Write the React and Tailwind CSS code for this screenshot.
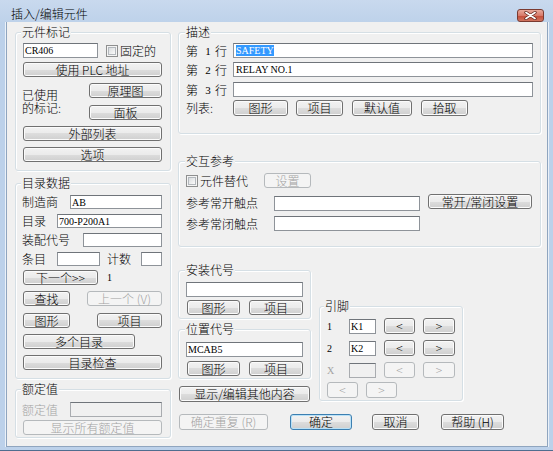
import React from 'react';

// Win7-style "插入/编辑元件" dialog

const Btn = ({ className = '', disabled, def, children }) => (
    <div
        className={`flex shrink-0 items-center justify-center rounded-[3px] border text-[12px] leading-[12px] ${disabled
            ? 'border-[#b5b9bc] bg-[#f4f4f4] text-[#a3a3a3]'
            : def
                ? 'border-[#3c7fb1] bg-[linear-gradient(#f2f2f2_0%,#ebebeb_50%,#dddddd_50%,#cfcfcf_100%)] text-black shadow-[inset_0_0_0_1px_#b9e1f7]'
                : 'border-[#707070] bg-[linear-gradient(#f2f2f2_0%,#ebebeb_50%,#dddddd_50%,#cfcfcf_100%)] text-black shadow-[inset_0_0_0_1px_#fbfbfb]'
            } ${className}`}
    >
        {children}
    </div>
);

const Field = ({ className = '', disabled, children }) => (
    <div
        className={`flex shrink-0 items-center overflow-hidden border border-[#8e9399] border-t-[#6f747a] pl-[1px] font-['Liberation_Serif',serif] text-[10px] leading-[11px] text-black ${disabled ? 'bg-[#f0f0f0] border-[#a9acb0]' : 'bg-white'} ${className}`}
    >
        {children}
    </div>
);

const Check = ({ className = '' }) => (
    <div className={`flex h-[12px] w-[12px] shrink-0 items-center justify-center border border-[#8e8f8f] bg-[#f4f4f4] ${className}`}>
        <div className="h-[8px] w-[8px] border border-[#b3b8bd] bg-[linear-gradient(135deg,#d9dcde,#fbfbfb)]" />
    </div>
);

const Group = ({ title, className = '', titleClass = 'ml-[5px]', children }) => (
    <div className={`flex shrink-0 flex-col rounded-[3px] border border-[#d5dfe5] shadow-[inset_1px_1px_0_#ffffff,1px_1px_0_#ffffff] ${className}`}>
        <div className={`-mt-[7px] h-[12px] w-fit bg-[#f0f0f0] px-[1px] text-[12px] leading-[12px] ${titleClass}`}>{title}</div>
        {children}
    </div>
);

const Label = ({ className = '', children }) => (
    <div className={`shrink-0 whitespace-nowrap text-[12px] leading-[12px] ${className}`}>{children}</div>
);

const LineLabel = ({ n }) => (
    <div className="ml-[7px] flex w-[47px] shrink-0 items-center text-[12px] leading-[12px]">
        <span>第</span>
        <span className="ml-[7px] w-[6px] text-center font-['Liberation_Serif',serif] text-[11px]">{n}</span>
        <span className="ml-[4px]">行</span>
    </div>
);

const PinRow = ({ n, value, disabled, className = '' }) => (
    <div className={`flex h-[16px] items-center ${className}`}>
        <div className={`ml-[7px] w-[22px] font-['Liberation_Serif',serif] text-[10px] ${disabled ? 'text-[#a3a3a3]' : 'text-black'}`}>{n}</div>
        <Field disabled={disabled} className="h-[15px] w-[27px]">{value}</Field>
        <Btn disabled={disabled} className="ml-[8px] h-[16px] w-[31px]">&lt;</Btn>
        <Btn disabled={disabled} className="ml-[8px] h-[16px] w-[32px]">&gt;</Btn>
    </div>
);

const CloseIcon = () => (
    <svg width="13" height="9" viewBox="0 0 13 9">
        <path d="M2 1.5 L11 7.5 M11 1.5 L2 7.5" stroke="#5a2018" strokeWidth="3.2" strokeLinecap="round" />
        <path d="M2 1.5 L11 7.5 M11 1.5 L2 7.5" stroke="#ffffff" strokeWidth="1.8" strokeLinecap="round" />
    </svg>
);

export default function App() {
    return (
        <div className="flex h-[451px] w-[553px] flex-col overflow-hidden bg-[#bcd1ea] font-['Noto_Sans_CJK_SC','Noto_Sans',sans-serif] font-light text-black">
            {/* Title bar */}
            <div className="flex h-[22px] shrink-0 bg-[linear-gradient(#c9d9ee,#bed2ea)]">
                <div className="ml-[11px] mt-[8px] text-[12px] leading-[12px]">插入/编辑元件</div>
                <div className="flex-1" />
                <div className="mr-[9px] mt-[9px] flex h-[13px] w-[27px] items-center justify-center rounded-[3px] border border-[#7a3a30] bg-[linear-gradient(#e9aa9c,#d77a6a_50%,#c24a36_51%,#d0745f)]">
                    <CloseIcon />
                </div>
            </div>

            <div className="flex">
                <div className="w-[6px] shrink-0 border-r border-r-[#eaf1f9]" />
                {/* Client area */}
                <div className="flex h-[425px] w-[542px] border-x border-b border-[#8fa5bf]">
                    <div className="flex h-[424px] w-[540px] bg-[#f0f0f0]">
                        {/* Left column */}
                        <div className="ml-[8px] mt-[10px] flex w-[156px] flex-col">
                            <Group title="元件标记" className="h-[139px]">
                                <div className="mt-[5px] flex h-[15px] items-center">
                                    <Field className="ml-[7px] h-[15px] w-[75px]">CR406</Field>
                                    <Check className="ml-[8px]" />
                                    <Label className="ml-[2px]">固定的</Label>
                                </div>
                                <Btn className="ml-[7px] mt-[4px] h-[15px] w-[139px]">使用 PLC 地址</Btn>
                                <div className="mt-[6px] flex">
                                    <div className="ml-[6px] mt-[6px] flex w-[67px] flex-col text-[12px] leading-[12px]">
                                        <span>已使用</span>
                                        <span className="mt-[1px]">的标记:</span>
                                    </div>
                                    <div className="flex flex-col">
                                        <Btn className="h-[15px] w-[73px]">原理图</Btn>
                                        <Btn className="mt-[7px] h-[15px] w-[73px]">面板</Btn>
                                    </div>
                                </div>
                                <Btn className="ml-[7px] mt-[6px] h-[15px] w-[139px]">外部列表</Btn>
                                <Btn className="ml-[7px] mt-[6px] h-[15px] w-[139px]">选项</Btn>
                            </Group>

                            <Group title="目录数据" className="mt-[12px] h-[196px]">
                                <div className="mt-[6px] flex h-[14px] items-center">
                                    <Label className="ml-[6px] w-[48px]">制造商</Label>
                                    <Field className="h-[14px] w-[92px]">AB</Field>
                                </div>
                                <div className="mt-[5px] flex h-[14px] items-center">
                                    <Label className="ml-[6px] w-[35px]">目录</Label>
                                    <Field className="h-[14px] w-[105px]">700-P200A1</Field>
                                </div>
                                <div className="mt-[5px] flex h-[14px] items-center">
                                    <Label className="ml-[6px] w-[61px]">装配代号</Label>
                                    <Field className="h-[14px] w-[79px]" />
                                </div>
                                <div className="mt-[5px] flex h-[14px] items-center">
                                    <Label className="ml-[6px] w-[35px]">条目</Label>
                                    <Field className="h-[14px] w-[43px]" />
                                    <Label className="ml-[7px] w-[34px]">计数</Label>
                                    <Field className="h-[14px] w-[21px]" />
                                </div>
                                <div className="mt-[4px] flex h-[15px] items-center">
                                    <Btn className="ml-[7px] h-[15px] w-[75px]">下一个&gt;&gt;</Btn>
                                    <div className="ml-[9px] font-['Liberation_Serif',serif] text-[10px]">1</div>
                                </div>
                                <div className="mt-[6px] flex">
                                    <Btn className="ml-[7px] h-[15px] w-[47px]">查找</Btn>
                                    <Btn disabled className="ml-[17px] h-[15px] w-[75px]">上一个 (V)</Btn>
                                </div>
                                <div className="mt-[7px] flex">
                                    <Btn className="ml-[7px] h-[15px] w-[47px]">图形</Btn>
                                    <Btn className="ml-[27px] h-[15px] w-[65px]">项目</Btn>
                                </div>
                                <Btn className="ml-[7px] mt-[6px] h-[15px] w-[112px]">多个目录</Btn>
                                <Btn className="ml-[7px] mt-[6px] h-[15px] w-[139px]">目录检查</Btn>
                            </Group>

                            <Group title="额定值" className="mt-[10px] h-[49px]">
                                <div className="mt-[7px] flex h-[15px] items-center">
                                    <Label className="ml-[6px] w-[48px] text-[#a3a3a3]">额定值</Label>
                                    <Field disabled className="h-[15px] w-[92px]" />
                                </div>
                                <Btn disabled className="ml-[7px] mt-[3px] h-[15px] w-[139px]">显示所有额定值</Btn>
                            </Group>
                        </div>

                        {/* Right column */}
                        <div className="ml-[7px] mt-[10px] flex w-[363px] flex-col">
                            <Group title="描述" className="h-[102px]" titleClass="ml-[6px]">
                                <div className="mt-[5px] flex h-[15px] items-center">
                                    <LineLabel n="1" />
                                    <Field className="h-[15px] w-[300px] pl-[2px]">
                                        <span className="bg-[#3399ff] text-white">SAFETY</span>
                                    </Field>
                                </div>
                                <div className="mt-[4px] flex h-[15px] items-center">
                                    <LineLabel n="2" />
                                    <Field className="h-[15px] w-[300px] pl-[2px]">RELAY NO.1</Field>
                                </div>
                                <div className="mt-[5px] flex h-[15px] items-center">
                                    <LineLabel n="3" />
                                    <Field className="h-[15px] w-[300px]" />
                                </div>
                                <div className="mt-[3px] flex h-[16px] items-center">
                                    <Label className="ml-[7px] w-[47px]">列表:</Label>
                                    <Btn className="h-[16px] w-[55px]">图形</Btn>
                                    <Btn className="ml-[8px] h-[16px] w-[47px]">项目</Btn>
                                    <Btn className="ml-[9px] h-[16px] w-[60px]">默认值</Btn>
                                    <Btn className="ml-[9px] h-[16px] w-[47px]">拾取</Btn>
                                </div>
                            </Group>

                            <Group title="交互参考" className="mt-[27px] h-[86px]" titleClass="ml-[6px]">
                                <div className="mt-[6px] flex h-[15px] items-center">
                                    <Check className="ml-[7px]" />
                                    <Label className="ml-[2px] w-[64px]">元件替代</Label>
                                    <Btn disabled className="h-[15px] w-[47px]">设置</Btn>
                                </div>
                                <div className="mt-[6px] flex items-start">
                                    <Label className="ml-[7px] mt-[3px] w-[88px]">参考常开触点</Label>
                                    <Field className="mt-[2px] h-[15px] w-[146px]" />
                                    <Btn className="ml-[8px] h-[15px] w-[104px]">常开/常闭设置</Btn>
                                </div>
                                <div className="mt-[5px] flex h-[15px] items-center">
                                    <Label className="ml-[7px] w-[88px]">参考常闭触点</Label>
                                    <Field className="h-[15px] w-[146px]" />
                                </div>
                            </Group>

                            <div className="mt-[23px] flex">
                                <div className="flex w-[133px] flex-col">
                                    <Group title="安装代号" className="h-[49px]" titleClass="ml-[6px]">
                                        <Field className="ml-[7px] mt-[6px] h-[15px] w-[117px]" />
                                        <div className="mt-[3px] flex">
                                            <Btn className="ml-[8px] h-[15px] w-[53px]">图形</Btn>
                                            <Btn className="ml-[9px] h-[15px] w-[54px]">项目</Btn>
                                        </div>
                                    </Group>
                                    <Group title="位置代号" className="mt-[10px] h-[50px]" titleClass="ml-[6px]">
                                        <Field className="ml-[7px] mt-[7px] h-[15px] w-[117px]">MCAB5</Field>
                                        <div className="mt-[4px] flex">
                                            <Btn className="ml-[8px] h-[15px] w-[53px]">图形</Btn>
                                            <Btn className="ml-[9px] h-[15px] w-[54px]">项目</Btn>
                                        </div>
                                    </Group>
                                    <Btn className="ml-[1px] mt-[7px] h-[16px] w-[131px]">显示/编辑其他内容</Btn>
                                </div>

                                <Group title="引脚" className="ml-[8px] mt-[36px] h-[95px] w-[144px]" titleClass="ml-[4px]">
                                    <PinRow n="1" value="K1" className="mt-[6px]" />
                                    <PinRow n="2" value="K2" className="mt-[6px]" />
                                    <PinRow n="X" disabled className="mt-[6px]" />
                                    <div className="mt-[4px] flex">
                                        <Btn disabled className="ml-[7px] h-[16px] w-[31px]">&lt;</Btn>
                                        <Btn disabled className="ml-[8px] h-[16px] w-[31px]">&gt;</Btn>
                                    </div>
                                </Group>
                            </div>

                            <div className="mt-[12px] flex">
                                <Btn disabled className="ml-[1px] h-[16px] w-[89px]">确定重复 (R)</Btn>
                                <Btn def className="ml-[22px] h-[16px] w-[62px]">确定</Btn>
                                <Btn className="ml-[20px] h-[16px] w-[47px]">取消</Btn>
                                <Btn className="ml-[22px] h-[16px] w-[63px]">帮助 (H)</Btn>
                            </div>
                        </div>
                    </div>
                </div>
                <div className="w-[5px] shrink-0 border-l border-l-[#eaf1f9]" />
            </div>
            <div className="flex-1 border-b border-[#4f6d8f]" />
        </div>
    );
}
